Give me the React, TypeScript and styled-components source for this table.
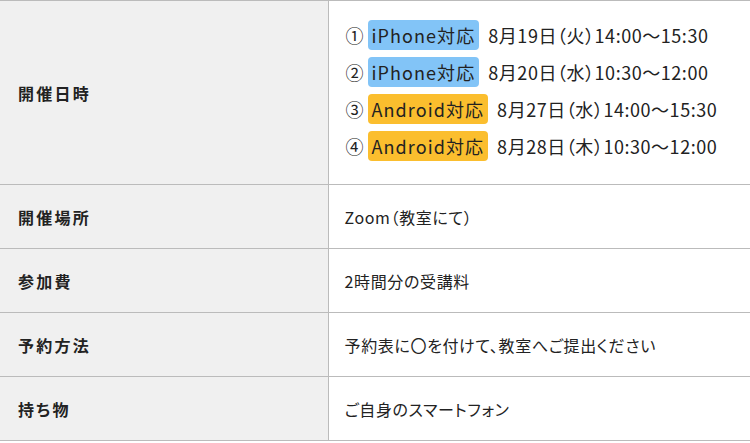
import styled, { createGlobalStyle } from "styled-components";

const GlobalStyle = createGlobalStyle`
  body {
    margin: 0;
    background: #fff;
    font-family: "Noto Sans CJK JP", "Noto Sans", sans-serif;
    color: #222;
  }
`;

type Device = "iphone" | "android";

const schedule: { no: string; device: Device; date: string }[] = [
  { no: "①", device: "iphone", date: "8月19日（火）14:00〜15:30" },
  { no: "②", device: "iphone", date: "8月20日（水）10:30〜12:00" },
  { no: "③", device: "android", date: "8月27日（水）14:00〜15:30" },
  { no: "④", device: "android", date: "8月28日（木）10:30〜12:00" },
];

const rows = [
  { label: "開催場所", value: "Zoom（教室にて）" },
  { label: "参加費", value: "2時間分の受講料" },
  { label: "予約方法", value: "予約表に〇を付けて、教室へご提出ください" },
  { label: "持ち物", value: "ご自身のスマートフォン" },
];

export default function App() {
  return (
    <>
      <GlobalStyle />
      <Table>
        <tbody>
          <Tr>
            <Th $tall>開催日時</Th>
            <Td $tall>
              {schedule.map((s) => (
                <Line key={s.no}>
                  <Num>{s.no}</Num>
                  <Badge $device={s.device}>
                    {s.device === "iphone" ? "iPhone対応" : "Android対応"}
                  </Badge>
                  <DateText>{s.date}</DateText>
                </Line>
              ))}
            </Td>
          </Tr>
          {rows.map((r) => (
            <Tr key={r.label}>
              <Th>{r.label}</Th>
              <Td>{r.value}</Td>
            </Tr>
          ))}
        </tbody>
      </Table>
    </>
  );
}

const Table = styled.table`
  width: 750px;
  border-collapse: collapse;
  table-layout: fixed;
  font-feature-settings: "palt";
`;

const Tr = styled.tr`
  border-top: 1px solid #bbbbbb;
  border-bottom: 1px solid #bbbbbb;
`;

const Th = styled.th<{ $tall?: boolean }>`
  width: 328px;
  height: ${(p) => (p.$tall ? "184px" : "64px")};
  box-sizing: border-box;
  padding: 0 18px;
  background: #f0f0f0;
  border-right: 1px solid #bbbbbb;
  text-align: left;
  font-size: 16px;
  font-weight: 700;
  letter-spacing: 0.14em;
  vertical-align: middle;
`;

const Td = styled.td<{ $tall?: boolean }>`
  padding: ${(p) => (p.$tall ? "0 0 5px 17px" : "0 0 0 16px")};
  font-size: 16px;
  letter-spacing: 0.04em;
  vertical-align: middle;
`;

const Line = styled.div`
  display: flex;
  align-items: center;
  height: 37px;
  font-size: 18px;
`;

const Num = styled.span`
  width: 22px;
`;

const Badge = styled.span<{ $device: Device }>`
  display: inline-flex;
  align-items: center;
  height: 30px;
  padding: 0 4px;
  border-radius: 4px;
  background: ${(p) => (p.$device === "iphone" ? "#82c4f7" : "#fbbe2e")};
  letter-spacing: 0.06em;
`;

const DateText = styled.span`
  margin-left: 9px;
  letter-spacing: 0.03em;
`;
